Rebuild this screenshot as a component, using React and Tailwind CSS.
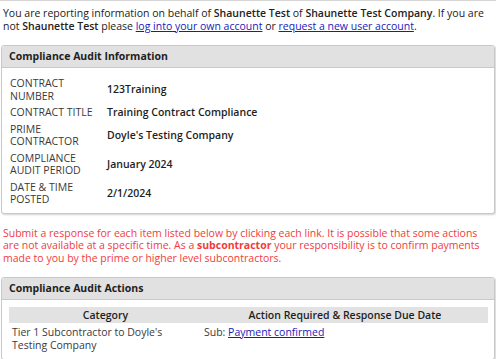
import React from 'react';

const infoRows = [
  ['CONTRACT NUMBER', '123Training'],
  ['CONTRACT TITLE', 'Training Contract Compliance'],
  ['PRIME CONTRACTOR', "Doyle's Testing Company"],
  ['COMPLIANCE AUDIT PERIOD', 'January 2024'],
  ['DATE & TIME POSTED', '2/1/2024'],
];

const Panel = ({ title, children, className = '' }) => (
  <div className={`mx-px border border-[#c9c9c9] rounded-[3px] shadow-[1px_1px_2px_rgba(0,0,0,0.18)] bg-white ${className}`}>
    <div className="h-[22px] flex items-center px-[7px] bg-[#e1e1e1] border-b border-[#c9c9c9] rounded-t-[3px] font-bold text-[#1e1e1e]">
      {title}
    </div>
    {children}
  </div>
);

export default function App() {
  return (
    <div className="w-[496px] h-[359px] overflow-hidden bg-white border-t border-[#d4d4d4] font-['Open_Sans',sans-serif] text-[10.5px] leading-[12.5px] text-[#222]">
      <p className="px-[3px] pt-[6px]">
        You are reporting information on behalf of <b className="font-semibold">Shaunette Test</b> of{' '}
        <b className="font-semibold">Shaunette Test Company</b>. If you are not <b className="font-semibold">Shaunette Test</b> please{' '}
        <a className="text-[#1a1ab8] underline" href="#">log into your own account</a> or{' '}
        <a className="text-[#1a1ab8] underline" href="#">request a new user account</a>.
      </p>

      <Panel title="Compliance Audit Information" className="mt-[13px]">
        <table className="ml-[8px] mt-[7px] mb-[5px] border-collapse">
          <tbody>
            {infoRows.map(([label, value]) => (
              <tr key={label}>
                <td className="w-[97px] pr-2 py-[2px] align-middle text-[#3a3a3a]">{label}</td>
                <td className="py-[2px] align-middle font-semibold text-[#1e1e1e]">{value}</td>
              </tr>
            ))}
          </tbody>
        </table>
      </Panel>

      <p className="px-[3px] mt-[13px] text-[#f23c3c]">
        Submit a response for each item listed below by clicking each link. It is possible that some actions are not available at a specific time. As a <b className="font-bold">subcontractor</b> your responsibility is to confirm payments made to you by the prime or higher level subcontractors.
      </p>

      <Panel title="Compliance Audit Actions" className="mt-[13px]">
        <div className="px-[7px] pr-[6px] pt-[7px] pb-[8px]">
          <table className="w-full table-fixed border-collapse">
            <colgroup>
              <col className="w-[193px]" />
              <col />
            </colgroup>
            <thead>
              <tr className="bg-[#e2e2e2] h-[16px]">
                <th className="font-semibold text-[#1e1e1e]">Category</th>
                <th className="font-semibold text-[#1e1e1e]">Action Required &amp; Response Due Date</th>
              </tr>
            </thead>
            <tbody>
              <tr>
                <td className="pl-[3px] pr-[12px] pt-[3px] align-top text-[#3a3a3a]">Tier 1 Subcontractor to Doyle's Testing Company</td>
                <td className="pl-[2px] pt-[3px] align-top text-[#3a3a3a]">
                  Sub: <a className="text-[#1a1ab8] underline" href="#">Payment confirmed</a>
                </td>
              </tr>
            </tbody>
          </table>
        </div>
      </Panel>
    </div>
  );
}
